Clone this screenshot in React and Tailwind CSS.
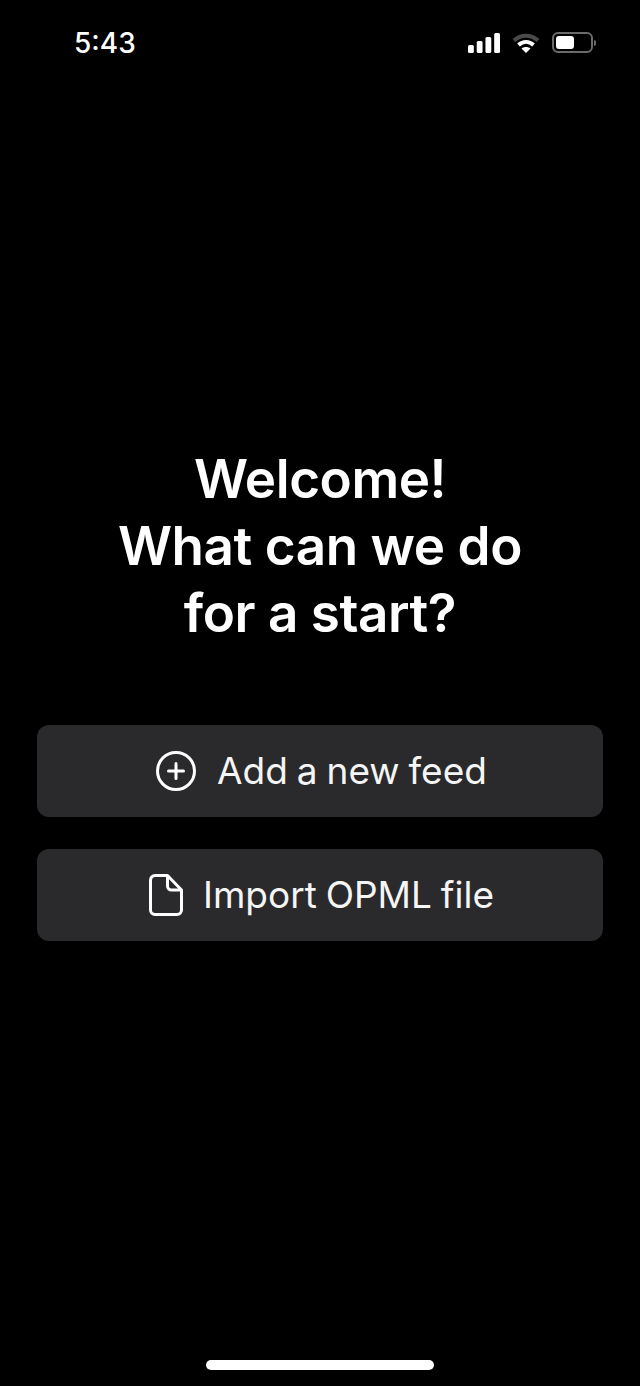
const FONT = 'font-["Inter",sans-serif]'

function SignalIcon() {
  return (
    <svg width="32" height="20" viewBox="0 0 33 20" fill="#fff" preserveAspectRatio="none">
      <rect x="0" y="12" width="6" height="8" rx="1.5" />
      <rect x="9" y="8" width="6" height="12" rx="1.5" />
      <rect x="18" y="4" width="6" height="16" rx="1.5" />
      <rect x="27" y="0" width="6" height="20" rx="1.5" />
    </svg>
  )
}

function WifiIcon() {
  return (
    <svg width="28" height="20" viewBox="0 0 28 20" fill="none" strokeWidth="4">
      <path d="M2 7.5C9 1 19 1 26 7.5" stroke="#4a4a4a" />
      <path d="M6.5 12C11 8 17 8 21.5 12" stroke="#fff" />
      <path d="M14 20L9.5 15.5C12 13.5 16 13.5 18.5 15.5Z" fill="#fff" />
    </svg>
  )
}

function BatteryIcon() {
  return (
    <div className="flex items-center gap-[1px]">
      <div className="flex h-[21px] w-[41px] items-stretch rounded-[6px] border-2 border-[#6a6a6a] px-[1.5px] py-[2px]">
        <div className="w-[18px] rounded-[3px] bg-white" />
      </div>
      <div className="h-[6px] w-[2px] rounded-r-full bg-[#6a6a6a]" />
    </div>
  )
}

function PlusCircleIcon() {
  return (
    <svg width="40" height="40" viewBox="0 0 40 40" fill="none" stroke="#fff" strokeWidth="3" strokeLinecap="round">
      <circle cx="20" cy="20" r="18.5" />
      <path d="M20 12.5V27.5M12.5 20H27.5" />
    </svg>
  )
}

function FileIcon() {
  return (
    <svg width="34" height="42" viewBox="0 0 34 42" fill="none" stroke="#fff" strokeWidth="3" strokeLinejoin="round">
      <path d="M6 1.5H18.5L32.5 16V36A4.5 4.5 0 0 1 28 40.5H6A4.5 4.5 0 0 1 1.5 36V6A4.5 4.5 0 0 1 6 1.5Z" />
      <path d="M18.5 1.5V12A4 4 0 0 0 22.5 16H32.5" />
    </svg>
  )
}

function ActionButton({ icon, label, gap }) {
  return (
    <button className={`flex h-[92px] w-full items-center justify-center rounded-[12px] bg-[#2a2a2c] pl-[3px] text-[37px] font-normal text-[#f5f5f5] [word-spacing:-1.5px] ${gap}`}>
      {icon}
      <span>{label}</span>
    </button>
  )
}

export default function App() {
  return (
    <div className={`flex h-[1386px] w-[640px] flex-col overflow-hidden bg-black text-white ${FONT}`}>
      <div className="flex h-[84px] items-start justify-between pl-[74px] pr-[44px] pt-[25px]">
        <span className="text-[28px] font-medium leading-[36px]">5:43</span>
        <div className="flex items-center gap-[12px] pt-[7px]">
          <SignalIcon />
          <WifiIcon />
          <BatteryIcon />
        </div>
      </div>

      <div className="flex flex-1 flex-col px-[37px] pt-[362px]">
        <h1 className="text-center text-[53px] font-semibold leading-[67px] tracking-[-0.45px]">
          Welcome!
          <br />
          What can we do
          <br />
          for a start?
        </h1>
        <div className="mt-[78px] flex flex-col gap-[32px]">
          <ActionButton icon={<PlusCircleIcon />} label="Add a new feed" gap="gap-[21px]" />
          <ActionButton icon={<FileIcon />} label="Import OPML file" gap="gap-[20px]" />
        </div>
      </div>

      <div className="flex justify-center pb-[16px]">
        <div className="h-[10px] w-[228px] rounded-full bg-white" />
      </div>
    </div>
  )
}
